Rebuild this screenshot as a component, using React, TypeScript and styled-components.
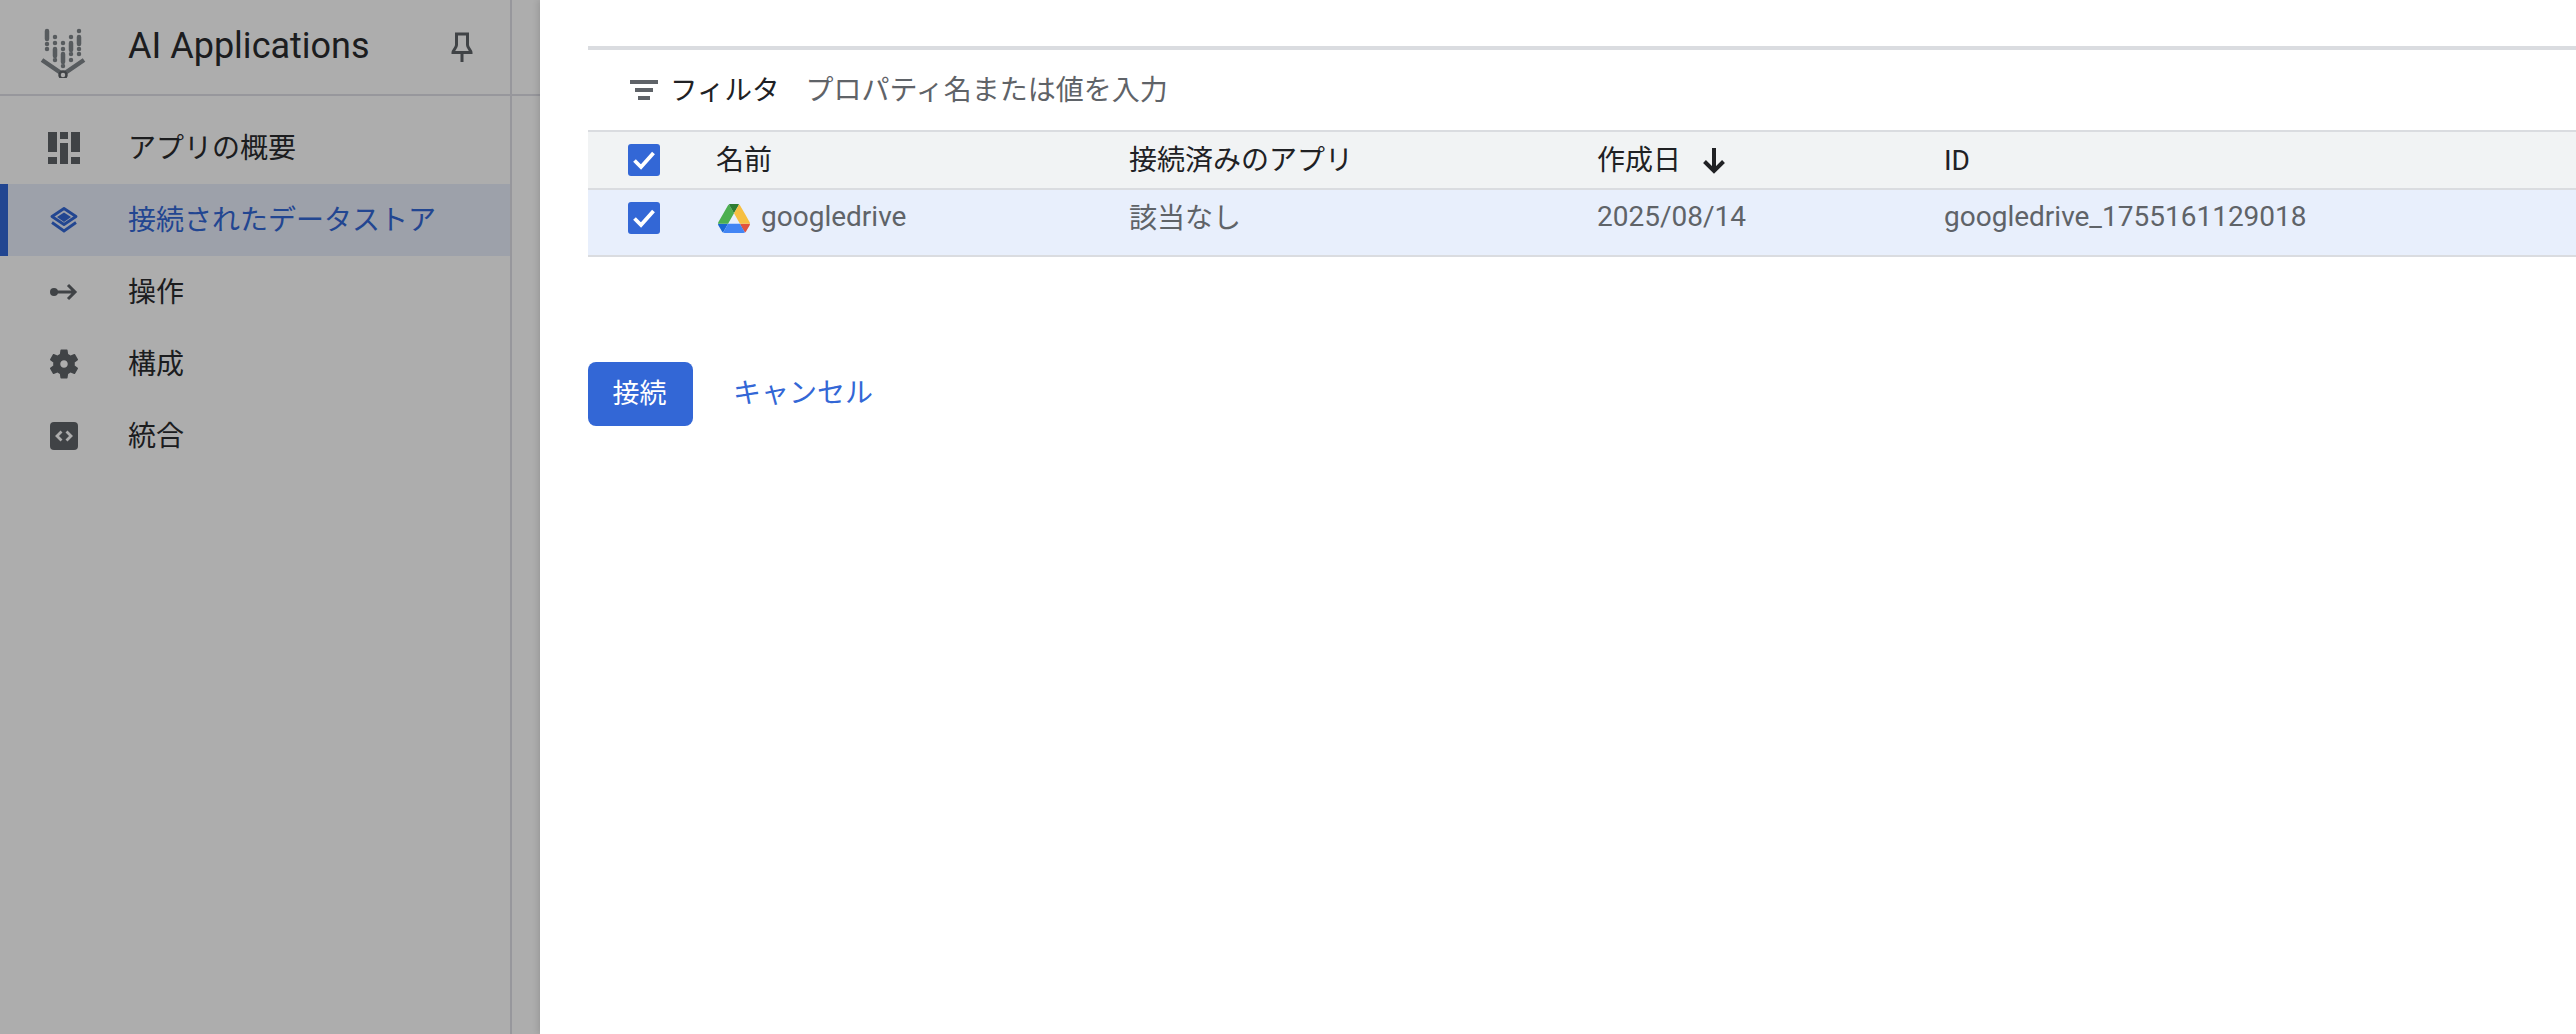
import React from 'react';
import styled, { createGlobalStyle } from 'styled-components';

const GlobalStyle = createGlobalStyle`
  html, body {
    margin: 0;
    padding: 0;
    background: #fff;
  }
  body {
    font-family: Roboto, "Noto Sans CJK JP", sans-serif;
    overflow: hidden;
  }
`;

const Page = styled.div`
  display: flex;
  width: 2576px;
  height: 1034px;
  position: relative;
  overflow: hidden;
`;

const Sidebar = styled.aside`
  width: 510px;
  flex: none;
  border-right: 2px solid #dfdfe6;
  background: #fff;
`;

const Brand = styled.div`
  height: 94px;
  display: flex;
  align-items: center;
  border-bottom: 2px solid #dfdfe6;
  padding: 0 37px 0 39px;
`;

const BrandName = styled.div`
  margin-left: 39px;
  flex: 1;
  font-size: 36px;
  color: #2a2b2e;
  position: relative;
  top: -1px;
`;

const Nav = styled.nav`
  padding-top: 16px;
`;

const NavRow = styled.div<{ $active?: boolean }>`
  height: 72px;
  display: flex;
  align-items: center;
  gap: 48px;
  padding-left: ${(p) => (p.$active ? '40px' : '48px')};
  font-size: 28px;
  color: ${(p) => (p.$active ? '#3367d6' : '#2a2b2e')};
  background: ${(p) => (p.$active ? '#e8edfb' : 'transparent')};
  border-left: ${(p) => (p.$active ? '8px solid #3367d6' : 'none')};
`;

const NavText = styled.span`
  margin-bottom: 5px;
`;

const IconSlot = styled.span`
  width: 32px;
  height: 32px;
  flex: none;
  display: flex;
  align-items: center;
  justify-content: center;
`;

const Strip = styled.div`
  width: 28px;
  flex: none;
  background: #fff;
`;

const StripHead = styled.div`
  height: 94px;
  border-bottom: 2px solid #dfdfe6;
`;

const Scrim = styled.div`
  position: absolute;
  left: 0;
  top: 0;
  bottom: 0;
  width: 540px;
  background: rgba(0, 0, 0, 0.32);
  z-index: 1;
`;

const Panel = styled.main`
  flex: 1;
  position: relative;
  z-index: 2;
  background: #fff;
  padding: 46px 0 0 48px;
  box-shadow: -2px 0 6px rgba(0, 0, 0, 0.12);
`;

const FilterBar = styled.div`
  height: 80px;
  border-top: 4px solid #dadce0;
  border-bottom: 2px solid #dadce0;
  display: flex;
  align-items: center;
  padding-left: 42px;
`;

const FilterLabel = styled.span`
  margin: 0 0 4px 12px;
  font-size: 27.5px;
  color: #202124;
`;

const FilterHint = styled.span`
  margin: 0 0 4px 26px;
  font-size: 28px;
  color: #5f6368;
`;

const TableRow = styled.div<{ $head?: boolean }>`
  display: grid;
  grid-template-columns: 128px 413px 468px 347px 1fr;
  height: ${(p) => (p.$head ? '56px' : '65px')};
  border-bottom: 2px solid #dadce0;
  background: ${(p) => (p.$head ? '#f1f3f4' : '#e8effc')};
  font-size: 28px;
  color: ${(p) => (p.$head ? '#202124' : '#5f6368')};
`;

const Cell = styled.div`
  display: flex;
  align-items: center;
  height: 56px;
  white-space: nowrap;
`;

const CellText = styled.span`
  margin-bottom: 4px;
`;

const CheckCell = styled(Cell)`
  padding-left: 40px;
`;

const CheckBox = styled.span`
  width: 32px;
  height: 32px;
  border-radius: 3px;
  background: #3367d6;
  display: flex;
  align-items: center;
  justify-content: center;
`;

const DriveMark = styled.svg`
  width: 32px;
  height: 29px;
  margin: 0 11px 0 2px;
`;

const SortArrow = styled.svg`
  width: 24px;
  height: 28px;
  margin-left: 21px;
`;

const Actions = styled.div`
  display: flex;
  align-items: center;
  margin-top: 105px;
`;

const PrimaryButton = styled.button`
  width: 105px;
  height: 64px;
  border: none;
  border-radius: 8px;
  background: #3367d6;
  color: #fff;
  font: inherit;
  font-size: 27px;
  padding: 0 2px 5px 0;
`;

const LinkButton = styled.button`
  margin: 0 0 6px 40px;
  border: none;
  padding: 0;
  background: none;
  color: #3367d6;
  font: inherit;
  font-size: 28px;
`;

const Logo = () => (
  <svg width="50" height="62" viewBox="40 8 50 62">
    <g stroke="#80868b" strokeLinecap="round" fill="none">
      <path d="M48 23v8M48 36v.1M48 41v.1" strokeWidth="4.500" />
      <path d="M56 29v.1M56 35v.1M56 41v7M56 52v.1" strokeWidth="4.500" />
      <path d="M64 35v.1M64 41v.1M64 46v8M64 58v.1" strokeWidth="4.500" />
      <path d="M72 29v.1M72 35v7M72 46v.1M72 52v.1" strokeWidth="4.500" />
      <path d="M80 23v.1M80 29v7M80 41v.1M80 46v.1" strokeWidth="4.500" />
      <path d="M43 52l19 13M85 52L66 65" strokeWidth="4.500" strokeLinecap="butt" />
      <circle cx="64" cy="67" r="3.500" strokeWidth="2.500" stroke="#5f6368" />
    </g>
  </svg>
);

const PinIcon = () => (
  <svg width="22" height="30" viewBox="0 0 22 30" fill="none" stroke="#5f6368" strokeWidth="3">
    <path d="M4 2h14M5.500 2v11C5.500 16 2 18 2 20.500h18C20 18 16.500 16 16.500 13V2M11 20v10" />
  </svg>
);

const DashIcon = () => (
  <svg width="32" height="32" viewBox="0 0 32 32" fill="#5f6368">
    <path d="M0 0h9v20H0zM0 25h9v7H0zM12 0h8v7h-8zM12 11h8v21h-8zM23 0h9v20h-9zM23 25h9v7h-9z" />
  </svg>
);

const StoreIcon = () => (
  <svg width="28" height="26" viewBox="0 0 28 26" fill="none">
    <path d="M14 1.500L2 9.500l12 8 12-8z" stroke="#3367d6" strokeWidth="2.800" strokeLinejoin="round" />
    <path d="M14 5.500l7 4.500-7 5-7-5z" fill="#3367d6" />
    <path d="M2 15.500L14 24l12-8.500" stroke="#3367d6" strokeWidth="2.800" />
  </svg>
);

const ActionIcon = () => (
  <svg width="28" height="18" viewBox="0 0 28 18" fill="none">
    <circle cx="4" cy="9" r="4" fill="#5f6368" />
    <path d="M4 9h21M18 2l7 7-7 7" stroke="#5f6368" strokeWidth="3" />
  </svg>
);

const GearIcon = () => (
  <svg width="30" height="30" viewBox="2 2 20 20" fill="#5f6368">
    <path d="M19.14 12.94c.04-.3.06-.61.06-.94 0-.32-.02-.64-.07-.94l2.03-1.58a.49.49 0 0 0 .12-.61l-1.92-3.32a.49.49 0 0 0-.59-.22l-2.39.96c-.5-.38-1.03-.7-1.62-.94l-.36-2.54a.48.48 0 0 0-.48-.41h-3.84c-.24 0-.43.17-.47.41l-.36 2.54c-.59.24-1.13.57-1.62.94l-2.39-.96c-.22-.08-.47 0-.59.22L2.74 8.87c-.12.21-.08.47.12.61l2.03 1.58c-.05.3-.09.63-.09.94s.02.64.07.94l-2.03 1.58a.49.49 0 0 0-.12.61l1.92 3.32c.12.22.37.29.59.22l2.39-.96c.5.38 1.03.7 1.62.94l.36 2.54c.05.24.24.41.48.41h3.84c.24 0 .44-.17.47-.41l.36-2.54c.59-.24 1.13-.56 1.62-.94l2.39.96c.22.08.47 0 .59-.22l1.92-3.32c.12-.22.07-.47-.12-.61l-2.01-1.58zM12 14.500c-1.380 0-2.500-1.120-2.500-2.500s1.120-2.500 2.500-2.500 2.500 1.120 2.500 2.500-1.120 2.500-2.500 2.500z" />
  </svg>
);

const EmbedIcon = () => (
  <svg width="28" height="28" viewBox="0 0 28 28" fill="none">
    <rect width="28" height="28" rx="4" fill="#5f6368" />
    <path d="M11.500 9.500L7 14l4.500 4.500M16.500 9.500L21 14l-4.500 4.500" stroke="#fff" strokeWidth="2.800" />
  </svg>
);

const FilterIcon = () => (
  <svg width="28" height="20" viewBox="0 0 28 20" fill="#5f6368" style={{ flex: 'none' }}>
    <path d="M0 0h28v4H0zM5 8h18v4H5zM8 16h12v4H8z" />
  </svg>
);

const CheckMark = () => (
  <svg width="24" height="20" viewBox="0 0 24 20" fill="none">
    <path d="M2.500 10.500l6.500 6.500L21.500 3" stroke="#fff" strokeWidth="3.800" />
  </svg>
);

const DriveLogo = () => (
  <DriveMark viewBox="0 0 87.3 78" preserveAspectRatio="none">
    <path d="m6.6 66.85 3.85 6.65c.8 1.4 1.95 2.5 3.3 3.3l13.75-23.8h-27.5c0 1.55.4 3.1 1.2 4.5z" fill="#1967d2" />
    <path d="m43.65 25-13.75-23.8c-1.35.8-2.5 1.9-3.3 3.3l-25.4 44a9.06 9.06 0 0 0 -1.2 4.5h27.5z" fill="#4caf50" />
    <path d="m73.55 76.8c1.35-.8 2.5-1.9 3.3-3.3l1.6-2.75 7.65-13.25c.8-1.4 1.2-2.95 1.2-4.5h-27.502l5.852 11.5z" fill="#e0533d" />
    <path d="m43.65 25 13.75-23.8c-1.35-.8-2.9-1.2-4.5-1.2h-18.5c-1.6 0-3.15.45-4.5 1.2z" fill="#2e7d32" />
    <path d="m59.8 53h-32.3l-13.75 23.8c1.35.8 2.9 1.2 4.5 1.2h50.8c1.6 0 3.15-.45 4.5-1.2z" fill="#4285f4" />
    <path d="m73.4 26.5-12.7-22c-.8-1.4-1.95-2.5-3.3-3.3l-13.75 23.8 16.15 28h27.45c0-1.55-.4-3.1-1.2-4.5z" fill="#f6bf41" />
  </DriveMark>
);

const navItems = [
  { label: 'アプリの概要', icon: <DashIcon /> },
  { label: '接続されたデータストア', icon: <StoreIcon />, active: true },
  { label: '操作', icon: <ActionIcon /> },
  { label: '構成', icon: <GearIcon /> },
  { label: '統合', icon: <EmbedIcon /> },
];

export default function App() {
  return (
    <>
      <GlobalStyle />
      <Page>
        <Sidebar>
          <Brand>
            <Logo />
            <BrandName>AI Applications</BrandName>
            <PinIcon />
          </Brand>
          <Nav>
            {navItems.map((item) => (
              <NavRow key={item.label} $active={item.active}>
                <IconSlot>{item.icon}</IconSlot>
                <NavText>{item.label}</NavText>
              </NavRow>
            ))}
          </Nav>
        </Sidebar>
        <Strip>
          <StripHead />
        </Strip>
        <Scrim />
        <Panel>
          <FilterBar>
            <FilterIcon />
            <FilterLabel>フィルタ</FilterLabel>
            <FilterHint>プロパティ名または値を入力</FilterHint>
          </FilterBar>
          <TableRow $head>
            <CheckCell>
              <CheckBox>
                <CheckMark />
              </CheckBox>
            </CheckCell>
            <Cell>
              <CellText>名前</CellText>
            </Cell>
            <Cell>
              <CellText>接続済みのアプリ</CellText>
            </Cell>
            <Cell>
              <CellText>作成日</CellText>
              <SortArrow viewBox="0 0 24 28" fill="none">
                <path d="M12 2v23M2.500 15.500L12 25l9.500-9.500" stroke="#202124" strokeWidth="4" />
              </SortArrow>
            </Cell>
            <Cell>ID</Cell>
          </TableRow>
          <TableRow>
            <CheckCell>
              <CheckBox>
                <CheckMark />
              </CheckBox>
            </CheckCell>
            <Cell>
              <DriveLogo />
              <CellText>googledrive</CellText>
            </Cell>
            <Cell>
              <CellText>該当なし</CellText>
            </Cell>
            <Cell>
              <CellText>2025/08/14</CellText>
            </Cell>
            <Cell>
              <CellText>googledrive_1755161129018</CellText>
            </Cell>
          </TableRow>
          <Actions>
            <PrimaryButton>接続</PrimaryButton>
            <LinkButton>キャンセル</LinkButton>
          </Actions>
        </Panel>
      </Page>
    </>
  );
}
